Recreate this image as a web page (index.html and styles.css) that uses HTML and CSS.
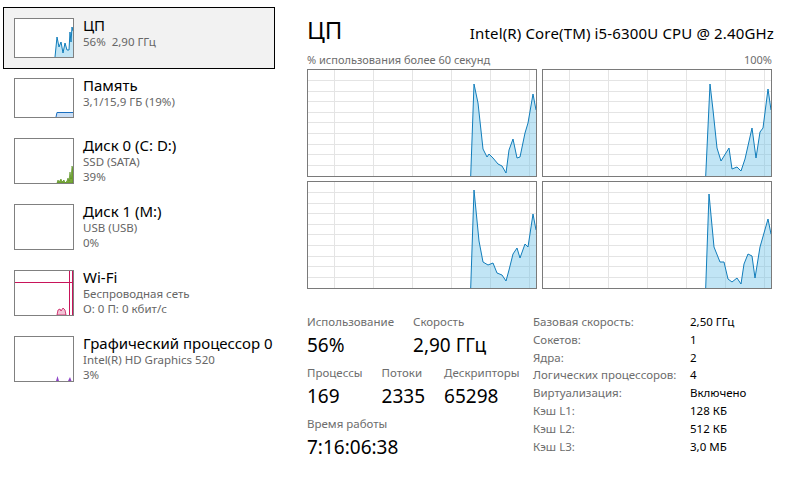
FILE: index.html
```html
<!DOCTYPE html>
<html lang="ru">
<head>
    <meta charset="UTF-8">
    <meta name="viewport" content="width=device-width, initial-scale=1.0">
    <title>Диспетчер задач - Производительность</title>
    <link rel="stylesheet" href="styles.css">
</head>
<body>
    <div class="app">
        <aside class="sidebar">
            <div class="item selected">
                <div class="thumb">
                    <svg width="58" height="38" viewBox="0 0 58 38">
                        <path class="area" d="M40,38 L42,18 L44,28 L46,23 L48,34 L50,24 L52,31 L54,31 L55,13 L56,23 L57,8 L58,12 L58,38 Z"/>
                        <path class="line" d="M40,38 L42,18 L44,28 L46,23 L48,34 L50,24 L52,31 L54,31 L55,13 L56,23 L57,8 L58,12"/>
                    </svg>
                </div>
                <div class="info">
                    <div class="name">ЦП</div>
                    <div class="sub">56%&nbsp;&nbsp;2,90 ГГц</div>
                </div>
            </div>

            <div class="item">
                <div class="thumb">
                    <svg width="58" height="38" viewBox="0 0 58 38">
                        <path class="mem-area" d="M41,38 L42,33 L58,33 L58,38 Z"/>
                        <path class="mem-line" d="M41,38 L42,33.5 L58,33.5"/>
                    </svg>
                </div>
                <div class="info">
                    <div class="name">Память</div>
                    <div class="sub">3,1/15,9 ГБ (19%)</div>
                </div>
            </div>

            <div class="item">
                <div class="thumb tall">
                    <svg width="58" height="44" viewBox="0 0 58 44">
                        <path class="disk" d="M42,44 L43,41 L44,43 L46,40 L47,43 L49,41 L50,44 L52,42 L53,39 L54,42 L55,33 L56,40 L57,27 L58,30 L58,44 Z"/>
                    </svg>
                </div>
                <div class="info">
                    <div class="name">Диск 0 (C: D:)</div>
                    <div class="sub">SSD (SATA)</div>
                    <div class="sub">39%</div>
                </div>
            </div>

            <div class="item">
                <div class="thumb tall"></div>
                <div class="info">
                    <div class="name">Диск 1 (M:)</div>
                    <div class="sub">USB (USB)</div>
                    <div class="sub">0%</div>
                </div>
            </div>

            <div class="item">
                <div class="thumb tall">
                    <svg width="58" height="44" viewBox="0 0 58 44">
                        <path class="net-line" d="M0,11.5 H58 M54.5,0 V44 M57.5,0 V44"/>
                        <path class="net-area" d="M42,44 L43,39 L45,38 L46,40 L48,37 L50,39 L51,44 Z"/>
                    </svg>
                </div>
                <div class="info">
                    <div class="name">Wi-Fi</div>
                    <div class="sub">Беспроводная сеть</div>
                    <div class="sub">О: 0 П: 0 кбит/с</div>
                </div>
            </div>

            <div class="item">
                <div class="thumb tall">
                    <svg width="58" height="44" viewBox="0 0 58 44">
                        <path class="gpu" d="M41,44 L42.5,39 L44,44 Z M53,44 L54,42 L55,40 L56.5,44 Z"/>
                    </svg>
                </div>
                <div class="info">
                    <div class="name">Графический процессор 0</div>
                    <div class="sub">Intel(R) HD Graphics 520</div>
                    <div class="sub">3%</div>
                </div>
            </div>
        </aside>

        <main class="details">
            <div class="header">
                <h1>ЦП</h1>
                <div class="model">Intel(R) Core(TM) i5-6300U CPU @ 2.40GHz</div>
            </div>
            <div class="axis">
                <span>% использования более 60 секунд</span>
                <span>100%</span>
            </div>

            <div class="graphs">
                <div class="graph">
                    <svg width="228" height="106" viewBox="0 0 228 106">
                        <defs>
                            <g id="grid" class="grid">
                                <path d="M26.5,0 V106 M65.5,0 V106 M104.5,0 V106 M143.5,0 V106 M182.5,0 V106 M221.5,0 V106"/>
                                <path d="M0,10.5 H228 M0,21.5 H228 M0,31.5 H228 M0,42.5 H228 M0,52.5 H228 M0,63.5 H228 M0,74.5 H228 M0,84.5 H228 M0,95.5 H228"/>
                            </g>
                        </defs>
                        <use href="#grid"/>
                        <path class="area" d="M162.7,106 L166,14 L170,33 L175,79 L179,87 L181,84 L185,88 L190,94 L194,96 L198,103 L201,80 L205,69 L209,88 L212,87 L217,63 L220,53 L225,24 L228,40 L228,106 Z"/>
                        <path class="line" d="M162.7,106 L166,14 L170,33 L175,79 L179,87 L181,84 L185,88 L190,94 L194,96 L198,103 L201,80 L205,69 L209,88 L212,87 L217,63 L220,53 L225,24 L228,40"/>
                    </svg>
                </div>
                <div class="graph">
                    <svg width="228" height="106" viewBox="0 0 228 106">
                        <use href="#grid"/>
                        <path class="area" d="M162.7,106 L167,14 L170,40 L174,78 L178,91 L186,78 L189,99 L194,97 L198,101 L202,89 L209,58 L213,88 L217,62 L220,58 L225,19 L228,40 L228,106 Z"/>
                        <path class="line" d="M162.7,106 L167,14 L170,40 L174,78 L178,91 L186,78 L189,99 L194,97 L198,101 L202,89 L209,58 L213,88 L217,62 L220,58 L225,19 L228,40"/>
                    </svg>
                </div>
                <div class="graph">
                    <svg width="228" height="106" viewBox="0 0 228 106">
                        <use href="#grid"/>
                        <path class="area" d="M162.7,106 L166,8 L171,59 L175,80 L180,83 L185,81 L189,91 L194,93 L198,99 L201,88 L205,72 L209,66 L212,76 L217,62 L220,65 L225,32 L228,48 L228,106 Z"/>
                        <path class="line" d="M162.7,106 L166,8 L171,59 L175,80 L180,83 L185,81 L189,91 L194,93 L198,99 L201,88 L205,72 L209,66 L212,76 L217,62 L220,65 L225,32 L228,48"/>
                    </svg>
                </div>
                <div class="graph">
                    <svg width="228" height="106" viewBox="0 0 228 106">
                        <use href="#grid"/>
                        <path class="area" d="M162.7,106 L166,12 L171,65 L177,80 L181,80 L185,97 L189,100 L194,96 L198,102 L201,82 L205,72 L209,74 L212,96 L217,65 L225,37 L228,52 L228,106 Z"/>
                        <path class="line" d="M162.7,106 L166,12 L171,65 L177,80 L181,80 L185,97 L189,100 L194,96 L198,102 L201,82 L205,72 L209,74 L212,96 L217,65 L225,37 L228,52"/>
                    </svg>
                </div>
            </div>

            <div class="bottom">
                <div class="stats">
                    <div class="stat-row">
                        <div class="stat">
                            <div class="stat-label">Использование</div>
                            <div class="stat-value">56%</div>
                        </div>
                        <div class="stat">
                            <div class="stat-label">Скорость</div>
                            <div class="stat-value">2,90 ГГц</div>
                        </div>
                    </div>
                    <div class="stat-row">
                        <div class="stat">
                            <div class="stat-label">Процессы</div>
                            <div class="stat-value">169</div>
                        </div>
                        <div class="stat">
                            <div class="stat-label">Потоки</div>
                            <div class="stat-value">2335</div>
                        </div>
                        <div class="stat">
                            <div class="stat-label">Дескрипторы</div>
                            <div class="stat-value">65298</div>
                        </div>
                    </div>
                    <div class="stat-row">
                        <div class="stat">
                            <div class="stat-label">Время работы</div>
                            <div class="stat-value">7:16:06:38</div>
                        </div>
                    </div>
                </div>

                <div class="specs">
                    <span class="key">Базовая скорость:</span><span>2,50 ГГц</span>
                    <span class="key">Сокетов:</span><span>1</span>
                    <span class="key">Ядра:</span><span>2</span>
                    <span class="key">Логических процессоров:</span><span>4</span>
                    <span class="key">Виртуализация:</span><span>Включено</span>
                    <span class="key">Кэш L1:</span><span>128 КБ</span>
                    <span class="key">Кэш L2:</span><span>512 КБ</span>
                    <span class="key">Кэш L3:</span><span>3,0 МБ</span>
                </div>
            </div>
        </main>
    </div>
</body>
</html>
```

FILE: styles.css
```css
body {
    margin: 0;
    font-family: "Noto Sans", sans-serif;
    background-color: #fff;
    color: #000;
}

.app {
    display: flex;
}

/* left list */
.sidebar {
    width: 300px;
    padding: 8px 0 0 4px;
    box-sizing: border-box;
    flex: none;
}

.item {
    display: flex;
    gap: 9px;
    width: 270px;
    padding: 10px;
    box-sizing: border-box;
}

.item.selected {
    background-color: #f2f2f2;
    outline: 1px solid #000;
}

.thumb {
    width: 60px;
    height: 40px;
    border: 1px solid #808080;
    box-sizing: border-box;
    background-color: #fff;
    flex: none;
}

.thumb.tall {
    height: 46px;
}

.thumb svg {
    display: block;
}

.info {
    margin-top: -2px;
    white-space: nowrap;
}

.name {
    font-size: 15px;
    line-height: 18px;
}

.sub {
    font-size: 11.5px;
    line-height: 15px;
    color: #666;
}

.mem-area {
    fill: #c9def5;
}

.mem-line {
    fill: none;
    stroke: #1a6fc0;
    stroke-width: 1;
}

.disk {
    fill: #7aa83a;
    stroke: #4d8a12;
    stroke-width: 0.6;
}

.net-line {
    fill: none;
    stroke: #c8145a;
    stroke-width: 1;
}

.net-area {
    fill: #f2c4d6;
    stroke: #c8145a;
    stroke-width: 0.8;
}

.gpu {
    fill: #8e44c7;
}

/* right details */
.details {
    width: 465px;
    padding-left: 7px;
    flex: none;
}

.header {
    display: flex;
    justify-content: space-between;
    align-items: baseline;
    padding-top: 14px;
}

.header h1 {
    margin: 0;
    font-size: 24px;
    line-height: 32px;
    font-weight: 400;
}

.model {
    font-size: 15px;
    letter-spacing: 0.15px;
    margin-right: -2px;
}

.axis {
    display: flex;
    justify-content: space-between;
    margin: 7px 0 2px;
    font-size: 11px;
    line-height: 14px;
    color: #6d6d6d;
}

.graphs {
    display: grid;
    grid-template-columns: 230px 230px;
    column-gap: 5px;
    row-gap: 4px;
}

.graph {
    border: 1px solid #7a7a7a;
    width: 230px;
    height: 108px;
    box-sizing: border-box;
}

.graph svg {
    display: block;
}

.grid path {
    fill: none;
    stroke: #e4e4e4;
    stroke-width: 1;
}

.area {
    fill: rgba(100, 190, 230, 0.4);
}

.line {
    fill: none;
    stroke: #117dbb;
    stroke-width: 1;
}

/* numbers under the graphs */
.bottom {
    display: flex;
    margin-top: 25px;
}

.stats {
    width: 226px;
    flex: none;
}

.stat-row {
    display: flex;
    margin-bottom: 8px;
}

.stat {
    margin-right: 19px;
}

.stat-label {
    font-size: 11.5px;
    line-height: 16px;
    color: #6d6d6d;
    white-space: nowrap;
}

.stat-value {
    font-size: 19px;
    line-height: 24px;
    margin-top: 3px;
    white-space: nowrap;
}

.specs {
    display: grid;
    grid-template-columns: 157px auto;
    grid-auto-rows: 17.8px;
    margin-top: -1px;
    font-size: 11.5px;
    line-height: 17.8px;
    white-space: nowrap;
}

.specs .key {
    color: #6d6d6d;
}
```
